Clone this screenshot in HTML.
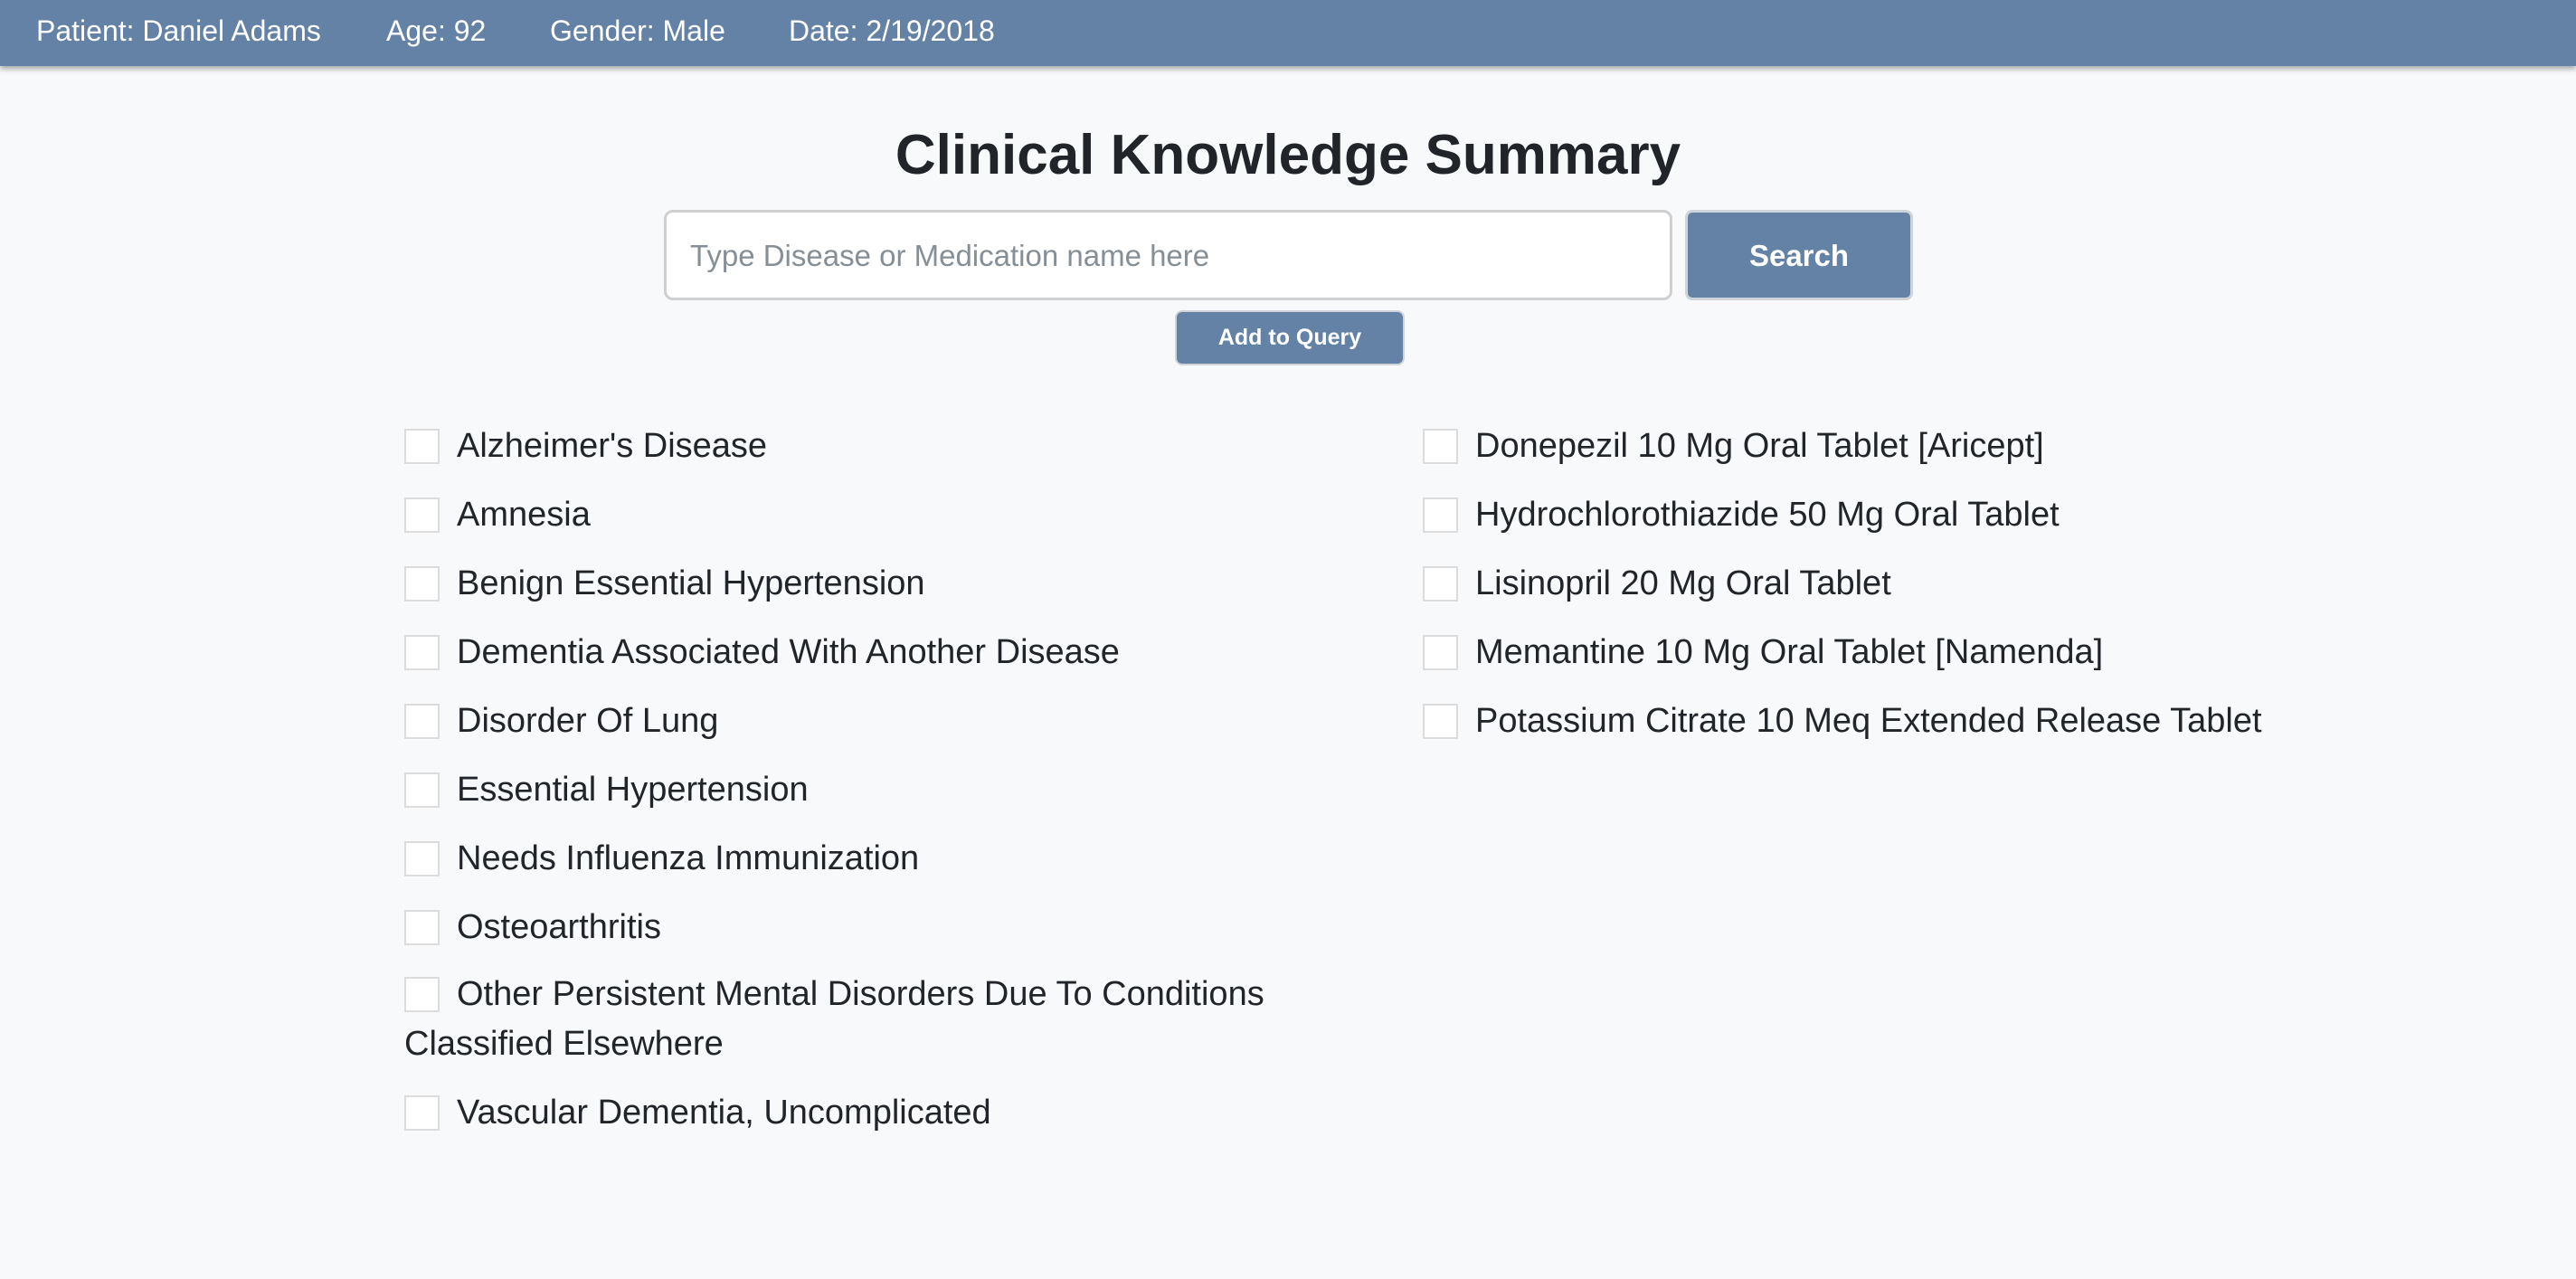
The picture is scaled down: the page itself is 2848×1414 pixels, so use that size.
<!DOCTYPE html>
<html><head><meta charset="utf-8"><style>
*{box-sizing:border-box;margin:0;padding:0}
body{width:2848px;height:1414px;background:#f8f9fa;font-family:"Liberation Sans",Arial,sans-serif;color:#212529;overflow:hidden;position:relative}
.hdr{position:absolute;left:0;top:0;width:2848px;height:73px;background:#6482a5;box-shadow:0 3px 6px rgba(0,0,0,.35)}
.hdr span{position:absolute;top:0;line-height:68px;color:#fff;font-size:32px}
h1{position:absolute;left:0;width:2848px;top:132px;text-align:center;font-size:62px;font-weight:bold;line-height:80px;color:#212529}
.inp{position:absolute;left:734px;top:232px;width:1115px;height:100px;border:3px solid #cfcfcf;border-radius:10px;background:#fff;font-size:33px;color:#868e96;padding-left:26px;line-height:96px}
.btn{position:absolute;background:#6482a5;color:#fff;font-weight:bold;text-align:center;border:3px solid #cfd4da;border-radius:8px}
.s{left:1863px;top:232px;width:252px;height:100px;font-size:33px;line-height:96px}
.a{left:1299px;top:343px;width:254px;height:61px;font-size:25px;line-height:57px;border-width:2px}
.col{position:absolute;top:466px;font-size:38px;line-height:55px}
.col div{margin-bottom:21px}
.cb{display:inline-block;width:39px;height:39px;border:2px solid #dcdcdc;background:#fff;vertical-align:-8px;margin-right:19px}
</style></head><body>
<div class="hdr"><span style="left:40px">Patient: Daniel Adams</span><span style="left:427px">Age: 92</span><span style="left:608px">Gender: Male</span><span style="left:872px">Date: 2/19/2018</span></div>
<h1>Clinical Knowledge Summary</h1>
<div class="inp">Type Disease or Medication name here</div>
<div class="btn s">Search</div>
<div class="btn a">Add to Query</div>
<div class="col" style="left:447px;width:1110px">
<div><span class="cb"></span>Alzheimer's Disease</div>
<div><span class="cb"></span>Amnesia</div>
<div><span class="cb"></span>Benign Essential Hypertension</div>
<div><span class="cb"></span>Dementia Associated With Another Disease</div>
<div><span class="cb"></span>Disorder Of Lung</div>
<div><span class="cb"></span>Essential Hypertension</div>
<div><span class="cb"></span>Needs Influenza Immunization</div>
<div><span class="cb"></span>Osteoarthritis</div>
<div style="margin-top:-2px"><span class="cb"></span>Other Persistent Mental Disorders Due To Conditions<br>Classified Elsewhere</div>
<div><span class="cb"></span>Vascular Dementia, Uncomplicated</div>
</div>
<div class="col" style="left:1573px;width:1250px">
<div><span class="cb"></span>Donepezil 10 Mg Oral Tablet [Aricept]</div>
<div><span class="cb"></span>Hydrochlorothiazide 50 Mg Oral Tablet</div>
<div><span class="cb"></span>Lisinopril 20 Mg Oral Tablet</div>
<div><span class="cb"></span>Memantine 10 Mg Oral Tablet [Namenda]</div>
<div><span class="cb"></span>Potassium Citrate 10 Meq Extended Release Tablet</div>
</div>
</body></html>
